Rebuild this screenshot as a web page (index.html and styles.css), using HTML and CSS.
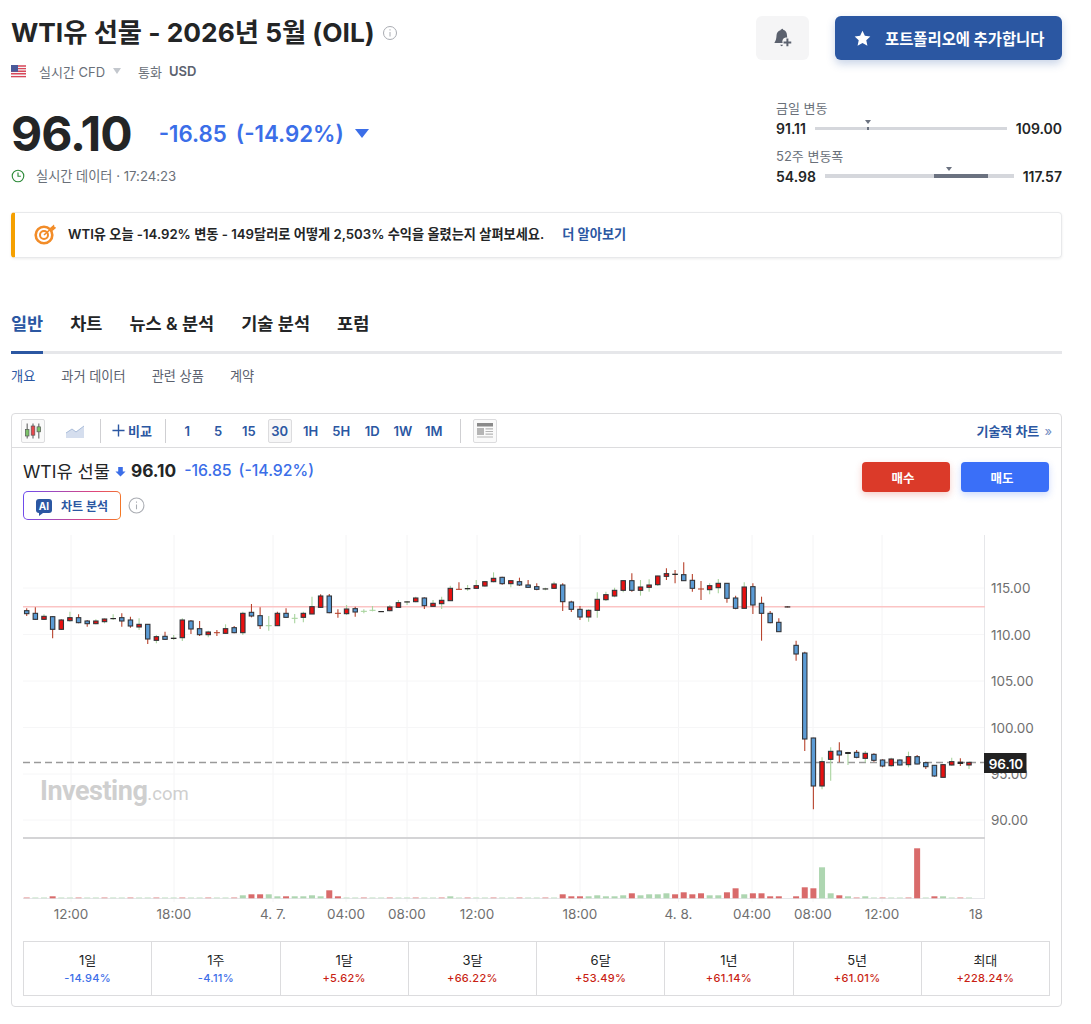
FILE: index.html
```html
<!DOCTYPE html>
<html lang="ko">
<head>
    <meta charset="UTF-8">
    <meta name="viewport" content="width=device-width, initial-scale=1.0">
    <title>WTI유 선물 - 2026년 5월 (OIL)</title>
    <link rel="stylesheet" href="styles.css">
</head>
<body>

    <!-- Instrument Header -->
    <div class="header">
        <div class="header-left">
            <div class="title-row">
                <h1>WTI유 선물 - 2026년 5월 (OIL)</h1>
                <svg class="info-icon" viewBox="0 0 16 16"><circle cx="8" cy="8" r="6.5"/><path d="M8 7v4.5M8 4.2v1.3"/></svg>
            </div>
            <div class="meta-row">
                <svg class="flag" viewBox="0 0 15 13">
                    <rect width="15" height="13" fill="#f4f4f6"/>
                    <path d="M0 1h15M0 3.6h15M0 6.2h15M0 8.8h15M0 11.6h15" stroke="#d9485a" stroke-width="1.4"/>
                    <rect width="7" height="6.8" fill="#4a5a9a"/>
                </svg>
                <span class="meta-source">실시간 CFD</span>
                <span class="caret"></span>
                <span class="meta-label">통화</span>
                <span class="meta-value">USD</span>
            </div>
        </div>
        <div class="header-actions">
            <button class="btn-bell">
                <svg viewBox="0 0 20 20"><path d="M9 1.5c.7 0 1.1.4 1.2 1 2.300.6 3.300 2.500 3.400 4.800 0 .8.100 1.500.3 2.200h-1.500a3.800 3.800 0 0 0-3 3.500c0 .5.100 1 .3 1.500H2.500c-.3 0-.4-.3-.2-.5 1.200-1.400 1.700-3.500 1.800-6.200.1-2.300 1.200-4.200 3.600-4.800 0-.6.600-1 1.300-1z" fill="#5b616e"/><path d="M7.500 16.200h2.500c-.2.800-.7 1.200-1.200 1.200s-1.100-.4-1.300-1.200z" fill="#5b616e"/><path d="M14 10.500v7M10.500 14h7" stroke="#5b616e" stroke-width="1.800" fill="none"/></svg>
            </button>
            <button class="btn-portfolio">
                <svg viewBox="0 0 18 18"><path d="M9 .8l2.500 5.400 5.800.7-4.300 4 1.200 5.800L9 13.800l-5.200 2.900L5 10.900.7 6.900l5.800-.7z" fill="#fff"/></svg>
                포트폴리오에 추가합니다
            </button>
        </div>
    </div>

    <!-- Price Block -->
    <div class="quote">
        <div class="quote-left">
            <div class="price-row">
                <span class="price">96.10</span>
                <span class="change">-16.85</span>
                <span class="change">(-14.92%)</span>
                <span class="change-arrow"></span>
            </div>
            <div class="time-row">
                <svg class="clock" viewBox="0 0 16 16"><circle cx="8" cy="8" r="6.600"/><path d="M8 4v4.300h3.300"/></svg>
                실시간 데이터 · 17:24:23
            </div>
        </div>
        <div class="ranges">
            <div class="range">
                <div class="range-label">금일 변동</div>
                <div class="range-row">
                    <b>91.11</b>
                    <div class="range-bar"><i class="range-fill" style="left: 27.2%; width: 2px"></i><i class="range-mark" style="left: 27.7%"></i></div>
                    <b>109.00</b>
                </div>
            </div>
            <div class="range">
                <div class="range-label">52주 변동폭</div>
                <div class="range-row">
                    <b>54.98</b>
                    <div class="range-bar thick"><i class="range-fill" style="left: 57.900%; width: 28.4%"></i><i class="range-mark" style="left: 65.800%"></i></div>
                    <b>117.57</b>
                </div>
            </div>
        </div>
    </div>

    <!-- Promo Banner -->
    <div class="banner">
        <svg class="target" viewBox="0 0 22 22">
            <circle cx="10" cy="12" r="8.300" fill="none" stroke="#f28c28" stroke-width="2.600"/>
            <circle cx="10" cy="12" r="4" fill="none" stroke="#f28c28" stroke-width="2"/>
            <path d="M10 12l9-8" stroke="#f28c28" stroke-width="1.600"/>
            <path d="M16 5l4-3.500.5 2.500 2 .5-4 3.500z" fill="#f28c28"/>
        </svg>
        <span class="banner-text">WTI유 오늘 -14.92% 변동 - 149달러로 어떻게 2,503% 수익을 올렸는지 살펴보세요.</span>
        <a href="#" class="banner-link">더 알아보기</a>
    </div>

    <!-- Tabs -->
    <div class="tabs">
        <a href="#" class="active">일반</a>
        <a href="#">차트</a>
        <a href="#">뉴스 &amp; 분석</a>
        <a href="#">기술 분석</a>
        <a href="#">포럼</a>
    </div>
    <div class="subtabs">
        <a href="#" class="active">개요</a>
        <a href="#">과거 데이터</a>
        <a href="#">관련 상품</a>
        <a href="#">계약</a>
    </div>

    <!-- Chart Panel -->
    <div class="panel">
        <div class="toolbar">
            <span class="tool-btn boxed">
                <svg viewBox="0 0 24 24">
                    <path d="M5 3v18M12 3v18M19 3v18" stroke="#555" stroke-width="1.200"/>
                    <rect x="2.800" y="10" width="4.400" height="8" fill="#7cc36a" stroke="#555" stroke-width=".8"/>
                    <rect x="9.800" y="6" width="4.400" height="11" fill="#e8474c" stroke="#555" stroke-width=".8"/>
                    <rect x="16.800" y="7" width="4.400" height="6" fill="#7cc36a" stroke="#555" stroke-width=".8"/>
                </svg>
            </span>
            <span class="tool-btn area">
                <svg viewBox="0 0 20 16"><path d="M1 10l6-4 4 3 8-6v12H1z" fill="#d5deee"/><path d="M1 10l6-4 4 3 8-6" fill="none" stroke="#a9bcd9" stroke-width="1"/></svg>
            </span>
            <span class="tool-sep first"></span>
            <span class="compare">
                <svg viewBox="0 0 14 14"><path d="M7 .5v13M.5 7h13" stroke="#2b57a2" stroke-width="1.500"/></svg>
                비교
            </span>
            <span class="tool-sep"></span>
            <div class="intervals">
                <span>1</span><span>5</span><span>15</span><span class="current">30</span><span>1H</span><span>5H</span><span>1D</span><span>1W</span><span>1M</span>
            </div>
            <span class="tool-sep"></span>
            <span class="tool-btn boxed news">
                <svg viewBox="0 0 20 20">
                    <rect x="2" y="2" width="16" height="3.500" fill="#8a8a8a"/>
                    <rect x="2" y="7" width="7" height="7" fill="#b5b5b5"/>
                    <path d="M10.500 7.800H18M10.500 10.500H18M10.500 13.200H18M2 16h16" stroke="#b5b5b5" stroke-width="1.200"/>
                </svg>
            </span>
            <a href="#" class="tech-link">기술적 차트 <span>»</span></a>
        </div>

        <div class="legend">
            <div class="legend-left">
                <div class="legend-quote">
                    <span class="legend-name">WTI유 선물</span>
                    <svg class="legend-arrow" viewBox="0 0 12 12"><path d="M3.500 1h5v5h3L6 11.500.5 6h3z" fill="#3b6ee8"/></svg>
                    <span class="legend-price">96.10</span>
                    <span class="legend-change">-16.85</span>
                    <span class="legend-change">(-14.92%)</span>
                </div>
                <div class="legend-tools">
                    <button class="btn-ai">
                        <span class="ai-badge">AI</span>
                        차트 분석
                    </button>
                    <svg class="info-icon small" viewBox="0 0 16 16"><circle cx="8" cy="8" r="7"/><path d="M8 7v4.500M8 4.200v1.300"/></svg>
                </div>
            </div>
            <div class="legend-actions">
                <button class="btn-buy">매수</button>
                <button class="btn-sell">매도</button>
            </div>
        </div>

        <svg id="chart" class="chart" viewBox="12 530 1049 400">
            <g id="grid"></g>
            <g id="candles"></g>
            <g id="volumes"></g>
            <text class="watermark" x="40" y="800">Investing<tspan>.com</tspan></text>
            <g id="labels"></g>
            <rect x="984" y="753" width="42.500" height="20" fill="#222"/>
            <text class="last-price" x="1006" y="768.500">96.10</text>
        </svg>

        <div class="stats">
            <div><span>1일</span><b class="down">-14.94%</b></div>
            <div><span>1주</span><b class="down">-4.11%</b></div>
            <div><span>1달</span><b class="up">+5.62%</b></div>
            <div><span>3달</span><b class="up">+66.22%</b></div>
            <div><span>6달</span><b class="up">+53.49%</b></div>
            <div><span>1년</span><b class="up">+61.14%</b></div>
            <div><span>5년</span><b class="up">+61.01%</b></div>
            <div><span>최대</span><b class="up">+228.24%</b></div>
        </div>
    </div>

    <script src="chart.js"></script>
</body>
</html>
```

FILE: styles.css
```css
* {
    margin: 0;
    padding: 0;
    box-sizing: border-box;
}

body {
    font-family: 'Inter', 'Noto Sans CJK KR', sans-serif;
    background-color: #fff;
    color: #232526;
    padding: 0 29px 0 11px;
}

a {
    text-decoration: none;
    color: inherit;
}

button {
    font-family: inherit;
    border: none;
    cursor: pointer;
}

/* Header */
.header {
    display: flex;
    justify-content: space-between;
    padding-top: 16px;
    height: 84px;
}

.title-row {
    display: flex;
    align-items: center;
    gap: 7px;
    height: 34px;
}

.title-row h1 {
    font-size: 26.300px;
    line-height: 34px;
    font-weight: 700;
}

.info-icon {
    width: 16px;
    height: 16px;
    fill: none;
    stroke: #a9acb2;
    stroke-width: 1;
}

.info-icon.small {
    width: 17px;
    height: 17px;
}

.meta-row {
    display: flex;
    align-items: center;
    margin-top: 12px;
    font-size: 13px;
    color: #6a7079;
    height: 18px;
}

.flag {
    width: 15px;
    height: 13px;
}

.meta-source {
    margin-left: 13px;
}

.caret {
    width: 0;
    height: 0;
    margin-left: 8px;
    border-left: 4.500px solid transparent;
    border-right: 4.500px solid transparent;
    border-top: 6px solid #c3c7cd;
}

.meta-label {
    margin-left: 17px;
}

.meta-value {
    margin-left: 7px;
    font-weight: 600;
    color: #5b616e;
}

.header-actions {
    display: flex;
    gap: 26px;
}

.btn-bell {
    width: 53px;
    height: 44px;
    background-color: #f5f5f6;
    border-radius: 6px;
    display: flex;
    align-items: center;
    justify-content: center;
}

.btn-bell svg {
    width: 22px;
    height: 22px;
}

.btn-portfolio {
    width: 227px;
    height: 44px;
    background-color: #2b57a2;
    color: #fff;
    border-radius: 6px;
    font-size: 15.400px;
    font-weight: 700;
    display: flex;
    align-items: center;
    padding-left: 19px;
    gap: 14px;
    box-shadow: 0 4px 8px rgba(43, 87, 162, 0.25);
}

.btn-portfolio svg {
    width: 17px;
    height: 17px;
}

/* Price */
.quote {
    display: flex;
    justify-content: space-between;
    height: 128px;
}

.price-row {
    display: flex;
    align-items: center;
    height: 66px;
    margin-top: 16px;
}

.price {
    font-size: 48px;
    font-weight: 700;
    letter-spacing: -1px;
    margin-right: 27px;
    color: #232526;
}

.change {
    font-size: 22.300px;
    font-weight: 600;
    color: #3b6ee8;
    margin-right: 9px;
}

.change-arrow {
    width: 0;
    height: 0;
    margin-left: 2px;
    border-left: 7px solid transparent;
    border-right: 7px solid transparent;
    border-top: 9px solid #3b6ee8;
}

.time-row {
    display: flex;
    align-items: center;
    gap: 11px;
    font-size: 13.200px;
    color: #6a7079;
}

.clock {
    width: 14px;
    height: 14px;
    fill: none;
    stroke: #2e8b3a;
    stroke-width: 1.300;
}

.ranges {
    width: 286px;
    padding-top: 15px;
}

.range {
    margin-bottom: 9px;
}

.range-label {
    font-size: 13px;
    line-height: 19px;
    color: #6a7079;
}

.range-row {
    display: flex;
    align-items: center;
    gap: 9px;
    font-size: 14px;
    height: 20px;
}

.range-row b {
    font-weight: 600;
}

.range-bar {
    flex: 1;
    height: 3px;
    background-color: #d5d7dc;
    position: relative;
}

.range-bar.thick {
    height: 4px;
}

.range-fill {
    position: absolute;
    top: 0;
    bottom: 0;
    background-color: #6b7280;
}

.range-mark {
    position: absolute;
    top: -7px;
    width: 0;
    height: 0;
    margin-left: -3px;
    border-left: 3px solid transparent;
    border-right: 3px solid transparent;
    border-top: 4px solid #6b7280;
}

/* Banner */
.banner {
    display: flex;
    align-items: center;
    height: 46px;
    border: 1px solid #e8e9eb;
    border-left: 4px solid #f5a000;
    border-radius: 4px;
    box-shadow: 0 1px 3px rgba(0, 0, 0, 0.08);
    padding: 0 0 3px 19px;
    font-size: 13.200px;
    font-weight: 600;
}

.target {
    width: 22px;
    height: 22px;
    margin-right: 12px;
}

.banner-link {
    color: #2b57a2;
    margin-left: 18px;
}

/* Tabs */
.tabs {
    display: flex;
    gap: 27px;
    margin-top: 49px;
    height: 47px;
    border-bottom: 3px solid #e6e7ea;
    font-size: 17.500px;
    font-weight: 600;
}

.tabs a {
    height: 47px;
    line-height: 34px;
}

.tabs a.active {
    color: #2b57a2;
    border-bottom: 3px solid #2b57a2;
}

.subtabs {
    display: flex;
    gap: 26px;
    height: 59px;
    font-size: 13.200px;
    line-height: 45px;
    color: #5b616e;
}

.subtabs a.active {
    color: #2b57a2;
}

/* Chart Panel */
.panel {
    border: 1px solid #dcdcde;
    border-radius: 4px;
    height: 594px;
}

.toolbar {
    display: flex;
    align-items: center;
    height: 34px;
    border-bottom: 1px solid #dcdcde;
    padding: 0 9px;
}

.tool-btn {
    width: 24px;
    height: 24px;
    display: flex;
    align-items: center;
    justify-content: center;
}

.tool-btn.boxed {
    border: 1px solid #dcdcde;
    border-radius: 2px;
    background-color: #fafafa;
}

.tool-btn svg {
    width: 20px;
    height: 20px;
}

.tool-btn.area {
    margin-left: 18px;
}

.tool-sep {
    width: 1px;
    height: 24px;
    background-color: #cfcfd2;
}

.tool-sep.first {
    margin-left: 13px;
}

.compare {
    display: flex;
    align-items: center;
    gap: 3px;
    margin: 0 13px 0 11px;
    font-size: 13px;
    font-weight: 700;
    color: #2b57a2;
}

.compare svg {
    width: 13px;
    height: 13px;
}

.intervals {
    display: flex;
    margin: 0 11px 0 6px;
}

.intervals span {
    width: 30.800px;
    height: 24px;
    line-height: 24px;
    text-align: center;
    font-size: 13px;
    font-weight: 600;
    color: #2b57a2;
}

.intervals .current {
    width: 24px;
    margin: 0 3.400px;
    background-color: #f6f6f7;
    border: 1px solid #dcdcde;
    border-radius: 2px;
    line-height: 22px;
}

.tool-btn.news {
    margin-left: 12px;
}

.tech-link {
    margin-left: auto;
    font-size: 13px;
    font-weight: 700;
    color: #2b57a2;
}

.tech-link span {
    font-weight: 400;
    margin-left: 2px;
    color: #6f8bc0;
}

/* Legend */
.legend {
    display: flex;
    justify-content: space-between;
    height: 82px;
    padding: 10px 12px 0 11px;
}

.legend-quote {
    display: flex;
    align-items: center;
    height: 24px;
}

.legend-name {
    font-size: 17.600px;
    color: #232526;
}

.legend-arrow {
    width: 11px;
    height: 11px;
    margin: 2px 5px 0 5px;
}

.legend-price {
    font-size: 17.300px;
    font-weight: 700;
    margin-right: 8px;
}

.legend-change {
    font-size: 15.800px;
    font-weight: 500;
    color: #3b6ee8;
    margin-right: 7px;
}

.legend-tools {
    display: flex;
    align-items: center;
    gap: 7px;
    margin-top: 9px;
}

.btn-ai {
    width: 98px;
    height: 29px;
    border-radius: 5px;
    border: 1px solid transparent;
    background: linear-gradient(#fff, #fff) padding-box, linear-gradient(100deg, #6a4cf0, #e0457b 70%, #f57c1f) border-box;
    display: flex;
    align-items: center;
    justify-content: center;
    gap: 9px;
    font-size: 12px;
    font-weight: 700;
    color: #2b57a2;
}

.ai-badge {
    position: relative;
    width: 16px;
    height: 14px;
    background-color: #2b57a2;
    border-radius: 3px;
    color: #fff;
    font-size: 10px;
    line-height: 14px;
    text-align: center;
}

.ai-badge::after {
    content: '';
    position: absolute;
    left: 3px;
    bottom: -3px;
    border-left: 4px solid #2b57a2;
    border-bottom: 3px solid transparent;
}

.legend-actions {
    display: flex;
    gap: 11px;
    padding-top: 4px;
}

.legend-actions button {
    width: 88px;
    height: 30px;
    padding-right: 6px;
    border-radius: 4px;
    color: #fff;
    font-size: 12.500px;
    font-weight: 700;
}

.btn-buy {
    background-color: #db3a29;
    box-shadow: 0 3px 7px rgba(219, 58, 41, 0.25);
}

.btn-sell {
    background-color: #3a6ff8;
    box-shadow: 0 3px 7px rgba(58, 111, 248, 0.25);
}

/* Chart */
.chart {
    display: block;
    width: 1049px;
    height: 400px;
    font-family: 'Inter', sans-serif;
}

.axis-label {
    font-size: 13.500px;
    fill: #6f6f6f;
}

.watermark {
    font-family: 'Roboto', sans-serif;
    font-size: 27px;
    font-weight: 700;
    fill: #cfcfcf;
    letter-spacing: -0.500px;
}

.watermark tspan {
    font-size: 18.500px;
    font-weight: 400;
    letter-spacing: 0;
}

.last-price {
    font-size: 13.500px;
    font-weight: 600;
    fill: #fff;
    text-anchor: middle;
}

/* Period Stats */
.stats {
    display: grid;
    grid-template-columns: repeat(8, 1fr);
    height: 55px;
    margin: 11px 11px 0 11px;
    border: 1px solid #dcdcde;
    border-right: none;
}

.stats div {
    border-right: 1px solid #dcdcde;
    text-align: center;
    padding-top: 8px;
}

.stats span {
    display: block;
    font-size: 13px;
    line-height: 20px;
    color: #232526;
}

.stats b {
    display: block;
    font-size: 11px;
    font-weight: 500;
    letter-spacing: 0.300px;
    line-height: 16px;
}

.down {
    color: #3b6ee8;
}

.up {
    color: #c91f14;
}
```

FILE: chart.js
```js
const NS = 'http://www.w3.org/2000/svg';

// Candle tops and bottoms are thirds of a pixel from the row's base y:
// [wick top, body top, body bottom, wick bottom, body + wick colour]
// body: b falling, r rising, d flat dash, c cross; wick: r or g
const rows = [
    [560, [
        [145,152,161,168,'br'],[142,160,178,180,'br'],[163,169,178,180,'rg'],[168,170,208,235,'br'],
        [178,180,208,210,'rr'],[155,173,182,185,'rg'],[163,173,188,190,'br'],[180,183,191,200,'br'],
        [178,183,191,193,'rg'],[175,177,185,190,'rg'],[163,174,177,180,'dg'],[160,173,183,200,'br'],
        [170,180,198,203,'br'],[175,193,201,210,'rg'],[193,193,237,252,'br'],[225,230,241,250,'rg'],
        [215,229,238,240,'br'],[225,233,237,240,'dg'],[175,180,233,243,'rg'],[180,183,207,222,'br'],
        [183,206,224,228,'br'],[212,216,224,232,'rg'],[210,218,218,228,'cr'],[193,206,220,222,'rg'],
        [198,203,218,220,'br'],[155,160,218,225,'rg'],[132,157,168,172,'br'],[142,167,197,207,'br'],
        [168,197,197,212,'cg'],[155,160,197,198,'rr'],[145,160,172,173,'br'],[162,175,175,190,'cg'],
        [155,160,172,187,'rg'],[110,140,162,162,'rg'],[103,108,142,143,'rr'],[102,108,158,160,'br'],
        [148,160,160,173,'cr']
    ]],
    [550, [
        [165,177,191,195,'rg'],[170,176,186,200,'br'],[178,184,184,190,'cg'],[168,181,181,184,'cg'],
        [184,183,186,186,'dg'],[165,171,182,184,'rg'],[150,158,172,172,'rg'],[153,154,157,165,'dg'],
        [140,144,155,157,'rg'],[142,144,167,177,'br'],[150,160,169,170,'rg'],[140,151,161,177,'rg'],
        [107,115,152,153,'rg'],[97,118,118,118,'cr'],[105,114,118,122,'dg'],[90,107,115,117,'rg'],
        [93,95,108,110,'rg'],[67,85,95,97,'rg'],[80,82,101,104,'br'],[90,92,101,112,'rg'],
        [83,95,105,108,'br'],[90,105,112,113,'br'],[100,110,118,121,'br'],[113,115,118,121,'dg'],
        [95,102,115,117,'rg'],[100,105,155,183,'br'],[152,156,178,186,'br'],[168,178,201,210,'br'],
        [178,181,201,215,'rg'],[127,148,181,203,'rg'],[125,134,149,153,'rg'],[113,121,138,142,'rg'],
        [90,92,121,127,'rg'],[70,92,121,125,'br'],[90,111,121,137,'rg'],[88,105,112,125,'rg'],
        [77,78,104,108,'rg'],[55,71,79,90,'rr'],[60,71,75,100,'dr'],[37,74,92,92,'br'],
        [72,91,115,125,'br'],[93,117,117,150,'cr'],[100,107,119,133,'rg'],[87,100,113,130,'rg'],
        [100,100,145,158,'br'],[137,144,175,178,'br'],[97,111,175,175,'rg'],[100,110,165,192,'br'],
        [140,160,190,272,'br'],[183,190,218,220,'br'],[205,217,245,245,'br'],[169,169,172,172,'dr'],
        [272,286,312,332,'br'],[305,309,567,603,'br'],[563,564,708,778,'br'],[622,635,708,718,'rg'],
        [592,604,628,692,'rg'],[577,603,615,637,'br'],[605,606,612,645,'dg'],[600,607,622,625,'br'],
        [603,610,625,637,'rg']
    ]],
    [720, [
        [100,103,121,125,'br'],[118,120,138,142,'br'],[113,117,137,140,'rg'],[117,120,135,137,'bg'],
        [95,110,134,142,'rg'],[105,110,132,133,'br'],[125,128,140,147,'br'],[135,136,168,170,'br'],
        [132,134,172,172,'rr'],[113,125,135,137,'rg'],[115,125,132,138,'dr'],[125,127,135,147,'rg']
    ]]
];

// volume bars by candle index, the rest are 1px
const volumes = {
    3:'r2', 25:'g3', 26:'r4', 27:'r4', 28:'g4', 29:'g2', 30:'r2', 31:'g2', 32:'g2', 33:'g3', 34:'g2',
    35:'r8', 36:'r2', 49:'g2', 62:'r4', 63:'r2', 64:'r2', 65:'g2', 66:'g3', 67:'g2', 68:'g2', 69:'g3',
    70:'r5', 71:'g3', 72:'g4', 73:'g4', 74:'g5', 75:'r4', 76:'r6', 77:'r4', 78:'r5', 79:'g3', 80:'g3',
    81:'r6', 82:'r10', 83:'g4', 84:'r5', 85:'r5', 86:'r2', 87:'r2', 88:'', 89:'r2', 90:'r11', 91:'r10',
    92:'g31', 93:'g5', 94:'r3', 95:'g2', 97:'g2', 103:'r50', 105:'r2', 106:'g2'
};

const gridX = [71, 174, 273, 346, 407, 477, 580, 678.5, 752, 813, 882];
const timeLabels = ['12:00', '18:00', '4. 7.', '04:00', '08:00', '12:00', '18:00', '4. 8.', '04:00', '08:00', '12:00'];
const priceLabels = [[115, 588], [110, 634.5], [105, 681], [100, 727.5], [95, 774], [90, 820]];

function add(parent, tag, attrs, text) {
    const el = document.createElementNS(NS, tag);
    for (const key in attrs) el.setAttribute(key, attrs[key]);
    if (text) el.textContent = text;
    document.getElementById(parent).appendChild(el);
}

function candleX(i) {
    return 26.7 + 8.645 * i;
}

// Grid and axes
gridX.forEach(function (x, i) {
    add('grid', 'line', { x1: x, x2: x, y1: 535, y2: 902, stroke: '#f4f4f5' });
    add('labels', 'text', { x: x, y: 919, class: 'axis-label', 'text-anchor': 'middle' }, timeLabels[i]);
});
add('labels', 'text', { x: 976, y: 919, class: 'axis-label', 'text-anchor': 'middle' }, '18');

priceLabels.forEach(function (p) {
    add('grid', 'line', { x1: 23, x2: 985, y1: p[1], y2: p[1], stroke: '#f6f6f7' });
    add('labels', 'text', { x: 991, y: p[1] + 5, class: 'axis-label' }, p[0] + '.00');
});

add('grid', 'line', { x1: 984.5, x2: 984.5, y1: 535, y2: 899, stroke: '#e6e7ea' });
add('grid', 'line', { x1: 23, x2: 985, y1: 838, y2: 838, stroke: '#d4d4d6', 'stroke-width': 2 });
add('grid', 'line', { x1: 23, x2: 985, y1: 898.5, y2: 898.5, stroke: '#e6e7ea' });
add('grid', 'line', { x1: 23, x2: 985, y1: 606.7, y2: 606.7, stroke: '#fbc4c4', 'stroke-width': 1.6 });
add('grid', 'line', { x1: 23, x2: 985, y1: 762.5, y2: 762.5, stroke: '#9a9a9a', 'stroke-width': 1.5, 'stroke-dasharray': '7 4' });

// Candles
let index = 0;
rows.forEach(function (row) {
    const base = row[0];
    row[1].forEach(function (c) {
        const x = candleX(index);
        const y = c.slice(0, 4).map(function (v) { return base + v / 3; });
        const wick = c[4][1] === 'g' ? '#a9d49f' : '#b8442e';
        const body = c[4][0];

        add('candles', 'line', { x1: x, x2: x, y1: y[0], y2: y[3], stroke: wick, 'stroke-width': 1.1 });

        if (body === 'c') {
            add('candles', 'line', { x1: x - 3, x2: x + 3, y1: y[1], y2: y[1], stroke: wick, 'stroke-width': 1.1 });
        } else if (body === 'd') {
            add('candles', 'rect', { x: x - 2.8, y: y[1], width: 5.6, height: Math.max(y[2] - y[1], 1.2), fill: '#2a2a2a' });
        } else {
            add('candles', 'rect', {
                x: x - 2.2, y: y[1], width: 4.4, height: y[2] - y[1],
                fill: body === 'r' ? '#e81010' : '#5b9bd5',
                stroke: '#33363b', 'stroke-width': 1.1
            });
        }
        index++;
    });
});

// Volume
for (let i = 0; i < 110; i++) {
    const v = volumes[i];
    if (v === '') continue;
    const up = v ? v[0] === 'r' : i % 3 === 0;
    const h = v ? Number(v.slice(1)) : 1;
    add('volumes', 'rect', {
        x: candleX(i) - 3, y: 898.3 - h, width: 6, height: h,
        fill: up ? '#d96b6b' : '#aed6b1',
        opacity: v ? 1 : 0.6
    });
}
```
